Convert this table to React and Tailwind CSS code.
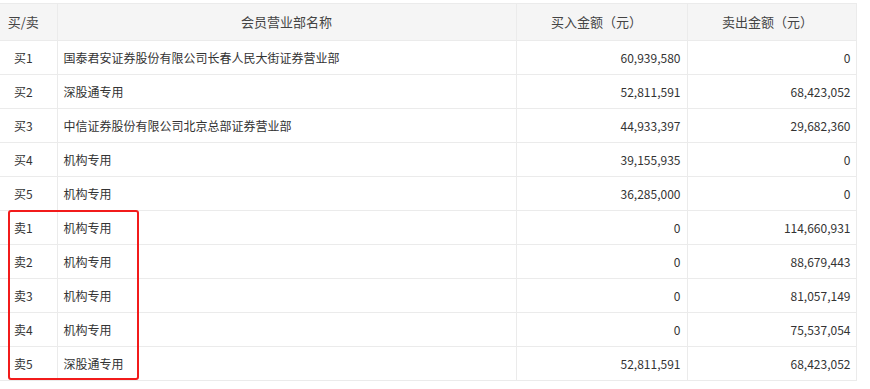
const rows = [
  ['买1', '国泰君安证券股份有限公司长春人民大街证券营业部', '60,939,580', '0'],
  ['买2', '深股通专用', '52,811,591', '68,423,052'],
  ['买3', '中信证券股份有限公司北京总部证券营业部', '44,933,397', '29,682,360'],
  ['买4', '机构专用', '39,155,935', '0'],
  ['买5', '机构专用', '36,285,000', '0'],
  ['卖1', '机构专用', '0', '114,660,931'],
  ['卖2', '机构专用', '0', '88,679,443'],
  ['卖3', '机构专用', '0', '81,057,149'],
  ['卖4', '机构专用', '0', '75,537,054'],
  ['卖5', '深股通专用', '52,811,591', '68,423,052'],
];

export default function App() {
  return (
    <div
      className="relative w-[870px] h-[389px] bg-white pt-[3px] text-[12px] text-[#333]"
      style={{ fontFamily: '"Noto Sans CJK SC", "Microsoft YaHei", sans-serif' }}
    >
      <table className="w-[856px] border-collapse table-fixed">
        <colgroup>
          <col className="w-[57px]" />
          <col className="w-[459px]" />
          <col className="w-[171px]" />
          <col className="w-[169px]" />
        </colgroup>
        <thead>
          <tr className="h-[37px] bg-[#f5f5f5] text-[13px] text-[#444]">
            <th className="font-normal text-center pr-[10px] border border-l-0 border-[#ebebeb]">买/卖</th>
            <th className="font-normal text-center border border-[#ebebeb]">会员营业部名称</th>
            <th className="font-normal text-center pr-[10px] border border-[#ebebeb]">买入金额（元）</th>
            <th className="font-normal text-center pr-[8px] border border-[#ebebeb]">卖出金额（元）</th>
          </tr>
        </thead>
        <tbody>
          {rows.map((r) => (
            <tr key={r[0]} className="h-[34px]">
              <td className="text-center pr-[10px] border border-l-0 border-[#ebebeb]">{r[0]}</td>
              <td className="pl-[6px] border border-[#ebebeb]">{r[1]}</td>
              <td className="text-right pr-[6px] border border-[#ebebeb]">{r[2]}</td>
              <td className="text-right pr-[5px] border border-[#ebebeb]">{r[3]}</td>
            </tr>
          ))}
        </tbody>
      </table>
      <div className="absolute left-[8px] top-[210px] w-[131px] h-[170px] border-2 border-[#f21b1b] rounded-[3px]" />
    </div>
  );
}
